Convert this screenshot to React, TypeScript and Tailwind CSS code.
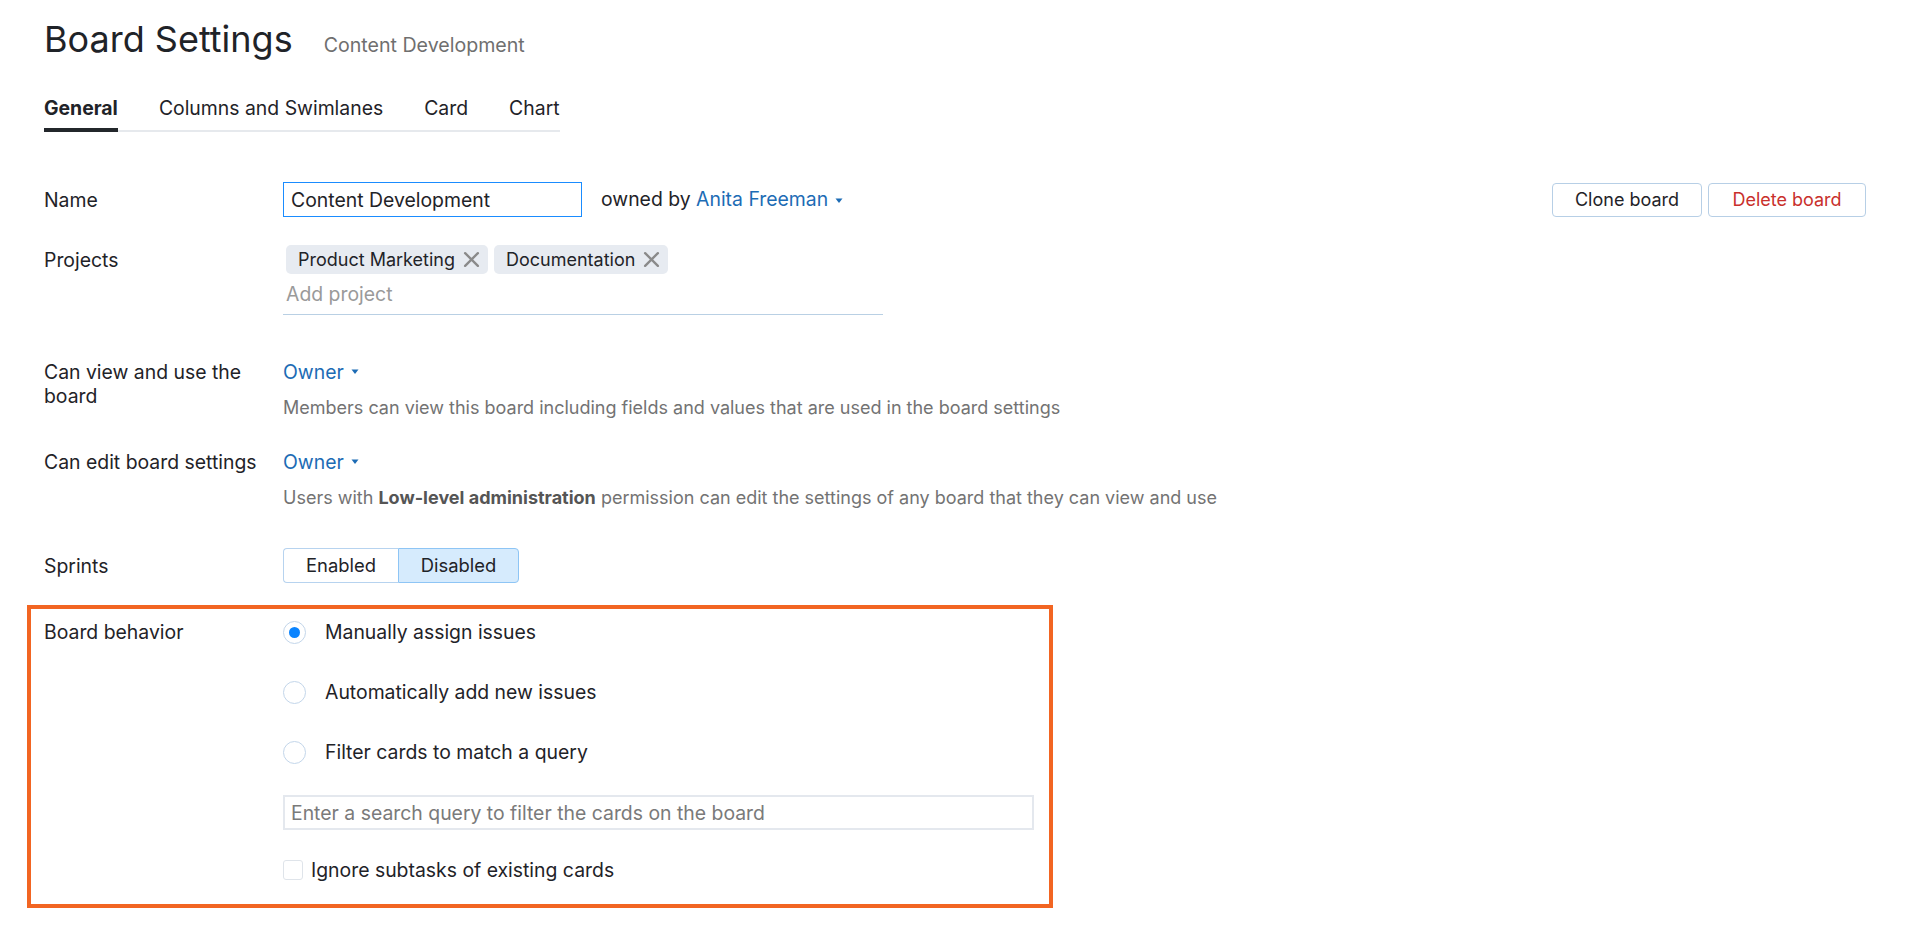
import { useState } from "react";

const labelCls = "text-[19.4px] leading-6 text-[#1f2328]";

function Caret() {
  return (
    <svg width="8" height="6" viewBox="0 0 8 6" className="ml-[7px] inline-block">
      <path d="M0.5 0.5 L7.5 0.5 L4 5 Z" fill="#1d6cb5" />
    </svg>
  );
}

function CloseIcon() {
  return (
    <svg width="17" height="17" viewBox="0 0 16 16" className="ml-[8px]">
      <path d="M2 2 L14 14 M14 2 L2 14" stroke="#8a8a8a" strokeWidth="2.2" strokeLinecap="round" />
    </svg>
  );
}

function Tag({ name }: { name: string }) {
  return (
    <div className="flex items-center h-[29px] pl-[12px] pr-[8px] rounded-[5px] bg-[#e7ebf1] text-[18px] text-[#1f2328]">
      {name}
      <CloseIcon />
    </div>
  );
}

function Radio({ checked, label, onClick }: { checked: boolean; label: string; onClick: () => void }) {
  return (
    <button onClick={onClick} className="flex items-center h-6 text-left">
      <span className="w-[23px] h-[23px] rounded-full border border-[#c3d6ea] flex items-center justify-center">
        {checked && <span className="w-[11px] h-[11px] rounded-full bg-[#0a84ff]" />}
      </span>
      <span className="ml-[19px] text-[19.4px] leading-6 text-[#1f2328]">{label}</span>
    </button>
  );
}

export default function App() {
  const [behavior, setBehavior] = useState("manual");
  const [sprints, setSprints] = useState("disabled");
  const [name, setName] = useState("Content Development");

  const tabs = ["General", "Columns and Swimlanes", "Card", "Chart"];

  return (
    <div className="min-h-screen bg-white font-['Inter',sans-serif] pl-[44px] pr-[47px] pt-[18px]">
      <div className="flex items-baseline gap-[31px]">
        <h1 className="text-[36px] leading-[42px] text-[#1f2328]">Board Settings</h1>
        <span className="text-[19.6px] text-[#6f6f6f]">Content Development</span>
      </div>

      <div className="mt-[36px] flex gap-[41px] border-b-2 border-[#e6e9ed] w-[516px]">
        {tabs.map((t, i) => (
          <div
            key={t}
            className={
              "pb-[8px] -mb-[2px] border-b-4 text-[19.4px] leading-6 " +
              (i === 0 ? "border-[#23272b] font-bold text-[#1f2328]" : "border-transparent text-[#1f2328]")
            }
          >
            {t}
          </div>
        ))}
      </div>

      <div className="mt-[50px] grid grid-cols-[239px_1fr] items-center">
        <div className={labelCls}>Name</div>
        <div className="flex items-center justify-between">
          <div className="flex items-center">
            <input
              value={name}
              onChange={e => setName(e.target.value)}
              className="w-[299px] h-[35px] border border-[#1a8cff] px-[7px] text-[19.4px] text-[#1f2328] outline-none"
            />
            <span className="ml-[19px] text-[19.4px] text-[#1f2328]">
              owned by <span className="text-[#1d6cb5]">Anita Freeman</span>
              <Caret />
            </span>
          </div>
          <div className="flex gap-[6px]">
            <button className="w-[150px] h-[34px] rounded-[4px] border border-[#b7cfe6] text-[18px] text-[#1f2328]">
              Clone board
            </button>
            <button className="w-[158px] h-[34px] rounded-[4px] border border-[#b7cfe6] text-[18px] text-[#c9302c]">
              Delete board
            </button>
          </div>
        </div>
      </div>

      <div className="mt-[28px] grid grid-cols-[239px_1fr]">
        <div className={labelCls + " mt-[3px]"}>Projects</div>
        <div className="w-[600px] border-b border-[#b9d0e4]">
          <div className="flex gap-[6px] pl-[3px]">
            <Tag name="Product Marketing" />
            <Tag name="Documentation" />
          </div>
          <div className="h-[40px] flex items-center pl-[3px] text-[19.4px] text-[#9a9a9a]">Add project</div>
        </div>
      </div>

      <div className="mt-[45px] grid grid-cols-[239px_1fr]">
        <div className={labelCls + " w-[215px]"}>Can view and use the board</div>
        <div>
          <div className="text-[19.4px] leading-6 text-[#1d6cb5] flex items-center">
            Owner
            <Caret />
          </div>
          <div className="mt-[12px] text-[18px] leading-6 text-[#737373]">
            Members can view this board including fields and values that are used in the board settings
          </div>
        </div>
      </div>

      <div className="mt-[30px] grid grid-cols-[239px_1fr]">
        <div className={labelCls}>Can edit board settings</div>
        <div>
          <div className="text-[19.4px] leading-6 text-[#1d6cb5] flex items-center">
            Owner
            <Caret />
          </div>
          <div className="mt-[12px] text-[18px] leading-6 text-[#737373]">
            Users with <span className="font-bold text-[#555]">Low-level administration</span> permission can edit the
            settings of any board that they can view and use
          </div>
        </div>
      </div>

      <div className="mt-[38px] grid grid-cols-[239px_1fr] items-center">
        <div className={labelCls}>Sprints</div>
        <div className="flex">
          <button
            onClick={() => setSprints("enabled")}
            className={
              "w-[115px] h-[35px] rounded-l-[4px] border text-[18.4px] text-[#1f2328] " +
              (sprints === "enabled" ? "bg-[#d6ebfd] border-[#8ec5f5]" : "bg-white border-[#b7d3ef] border-r-0")
            }
          >
            Enabled
          </button>
          <button
            onClick={() => setSprints("disabled")}
            className={
              "w-[121px] h-[35px] rounded-r-[4px] border text-[18.4px] text-[#1f2328] " +
              (sprints === "disabled" ? "bg-[#d6ebfd] border-[#8ec5f5]" : "bg-white border-[#b7d3ef] border-l-0")
            }
          >
            Disabled
          </button>
        </div>
      </div>

      <div className="mt-[22px] -ml-[17px] w-[1026px] border-4 border-[#f26522] pl-[13px] pt-[11px] pb-[22px]">
        <div className="grid grid-cols-[239px_1fr]">
          <div className={labelCls}>Board behavior</div>
          <div className="flex flex-col">
            <div className="flex flex-col gap-[36px]">
              <Radio checked={behavior === "manual"} label="Manually assign issues" onClick={() => setBehavior("manual")} />
              <Radio checked={behavior === "auto"} label="Automatically add new issues" onClick={() => setBehavior("auto")} />
              <Radio checked={behavior === "filter"} label="Filter cards to match a query" onClick={() => setBehavior("filter")} />
            </div>
            <input
              placeholder="Enter a search query to filter the cards on the board"
              className="mt-[31px] w-[751px] h-[35px] border-2 border-[#e4e8ee] px-[6px] text-[19.4px] text-[#1f2328] placeholder:text-[#7a7a7a] outline-none"
            />
            <label className="mt-[28px] flex items-center h-6">
              <span className="w-[20px] h-[20px] rounded-[3px] border border-[#dfe4ea]" />
              <span className="ml-[8px] text-[19.4px] leading-6 text-[#1f2328]">Ignore subtasks of existing cards</span>
            </label>
          </div>
        </div>
      </div>
    </div>
  );
}
